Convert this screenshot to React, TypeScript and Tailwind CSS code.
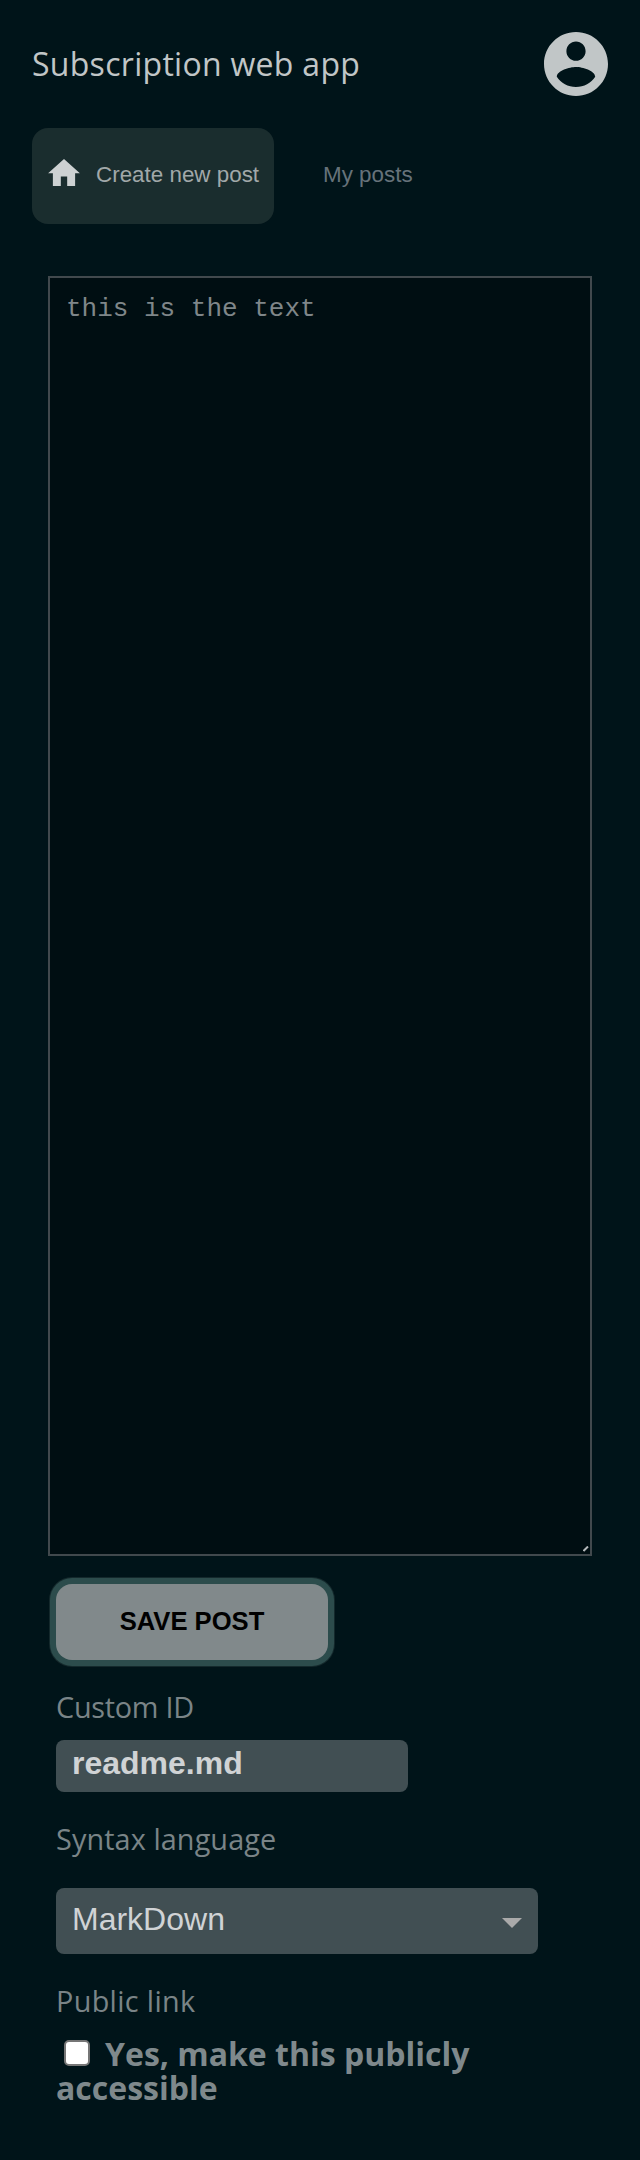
import React from "react";

function NavTabs() {
  return (
    <nav className="mt-8 ml-8 flex h-24 font-['Liberation_Sans',sans-serif] text-[22.4px]">
      <a className="flex h-24 w-[242px] items-center rounded-2xl bg-[#1a2d2e] pl-4 text-[#a1a8a9]">
        <svg viewBox="2 3 20 17" className="mb-[7px] h-[27px] w-8 shrink-0" fill="#cdd1d2">
          <path d="M10 20v-6h4v6h5v-8h3L12 3 2 12h3v8z" />
        </svg>
        <span className="mb-[2px] ml-4 whitespace-nowrap leading-8">Create new post</span>
      </a>
      <a className="mb-[2px] ml-[49px] flex items-center leading-8 text-[#66727a]">My posts</a>
    </nav>
  );
}

export default function App() {
  return (
    <div className="h-[2160px] w-[640px] overflow-hidden bg-[#001419] font-['Open_Sans',sans-serif]">
      <header className="flex h-24 items-start justify-between pr-8 pl-8">
        <h1 className="mt-[42px] text-[32px] leading-[44px] tracking-[0.29px] text-[#c1c6c7]">Subscription web app</h1>
        <svg viewBox="2 2 20 20" className="mt-8 size-16" fill="#c1c6c7">
          <path d="M12 2C6.48 2 2 6.48 2 12s4.48 10 10 10 10-4.48 10-10S17.52 2 12 2zm0 3c1.66 0 3 1.34 3 3s-1.34 3-3 3-3-1.34-3-3 1.34-3 3-3zm0 14.2c-2.5 0-4.71-1.28-6-3.22.03-1.99 4-3.08 6-3.08 1.99 0 5.97 1.09 6 3.08-1.29 1.94-3.5 3.22-6 3.22z" />
        </svg>
      </header>
      <NavTabs />
      <div className="relative mt-[52px] ml-12 h-[1280px] w-[544px]">
        <textarea
          defaultValue="this is the text"
          className="block size-full resize-none rounded-none border-2 border-[#41494d] bg-[#000e12] p-4 font-['Liberation_Mono',monospace] text-[26px] leading-[30px] text-[#7f8689] outline-none"
        />
        <svg viewBox="0 0 6 6" className="absolute right-[3px] bottom-[4px] size-[6px]" stroke="#b4b8ba" strokeWidth="2">
          <path d="M0.5 5L5 0.5" />
        </svg>
      </div>
      <form className="ml-14 flex w-[482px] flex-col items-start">
        <button
          type="button"
          className="mt-7 h-[76px] w-[272px] rounded-2xl bg-[#81898b] pb-[2px] font-['Liberation_Sans',sans-serif] text-[25.6px] font-bold text-black shadow-[0_0_0_6px_#2c4c4c,0_0_0_7px_#14292c]"
        >
          SAVE POST
        </button>
        <label className="mt-[28px] text-[28.8px] leading-[38px] tracking-[-0.25px] text-[#7a8487]">Custom ID</label>
        <input
          defaultValue="readme.md"
          className="mt-[14px] h-[52px] w-[352px] rounded-lg bg-[#414f53] px-4 pb-[6px] font-['Liberation_Sans',sans-serif] text-[32px] leading-9 font-bold text-[#d0d3d5] outline-none"
        />
        <label className="mt-[28px] text-[28.8px] leading-[38px] tracking-[0.1px] text-[#7a8487]">Syntax language</label>
        <div className="mt-[30px] flex h-[66px] w-[482px] items-center justify-between rounded-lg bg-[#414f53] px-4 font-['Liberation_Sans',sans-serif] text-[32px] text-[#d0d3d5]">
          <span className="pb-1 leading-9">MarkDown</span>
          <svg viewBox="0 0 20 10" className="mt-[3px] h-[10px] w-5" fill="#aaaaaa">
            <path d="M0 0h20L10 10z" />
          </svg>
        </div>
        <label className="mt-[28px] text-[28.8px] leading-[38px] tracking-[0.34px] text-[#7a8487]">Public link</label>
        <label className="mt-[17px] block text-[32px] leading-[34px] font-bold text-[#7f898c]">
          <span className="mr-[15px] ml-2 inline-block size-[26px] rounded-[5px] border-2 border-[#767676] bg-white align-baseline" />
          Yes, make this publicly <br />
          accessible
        </label>
      </form>
    </div>
  );
}
